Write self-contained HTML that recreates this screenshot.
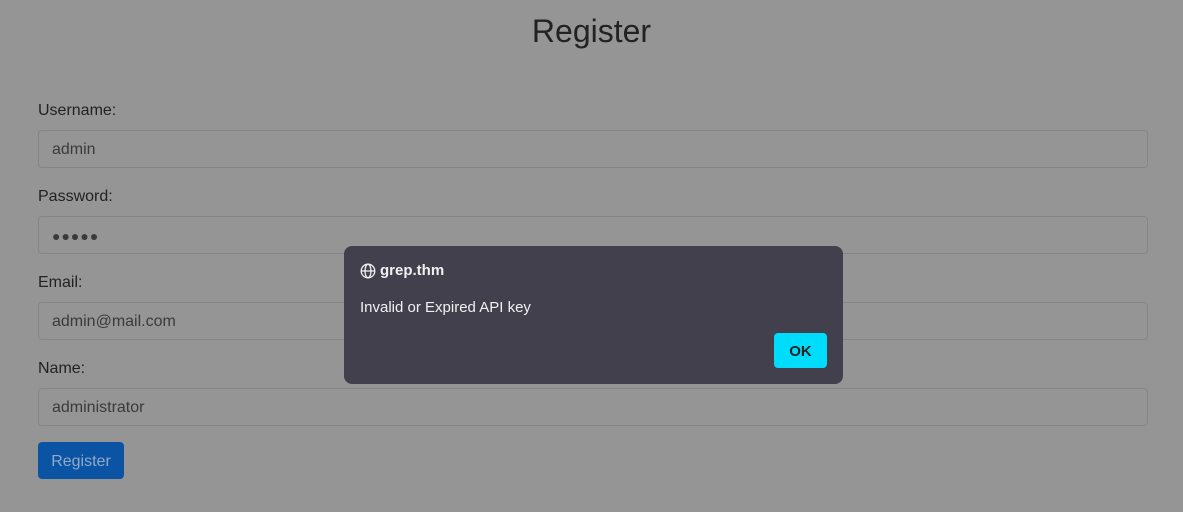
<!DOCTYPE html>
<html><head><style>
body{margin:0;width:1183px;height:512px;background:#959595;font-family:"Liberation Sans",sans-serif;position:relative;overflow:hidden}
h1{margin:0;position:absolute;top:13px;left:0;width:1183px;text-align:center;font-weight:400;font-size:32px;color:#222}
.l{position:absolute;left:38px;font-size:16px;color:#222}
.i{position:absolute;left:38px;width:1108px;height:36px;border:1px solid #858585;border-radius:4px;box-sizing:content-box;font-size:16px;color:#3a3a3a;line-height:38px;text-indent:13px}
.b{position:absolute;left:38px;top:442px;width:86px;height:37px;background:#0b54a4;border-radius:4px;color:#8fa9c9;font-size:16px;line-height:39px;text-align:center}
.d{position:absolute;left:344px;top:246px;width:499px;height:138px;background:#42404d;border-radius:8px;color:#f0f0f0;font-family:"Liberation Sans",sans-serif}
.t{position:absolute;left:16px;top:16px;font-size:15px;font-weight:bold;display:flex;align-items:center;gap:4px}
.m{position:absolute;left:16px;top:53px;font-size:15px}
.ok{position:absolute;left:430px;top:87px;width:53px;height:35px;background:#00dcfb;border-radius:4px;color:#222;font-weight:bold;font-size:15px;line-height:37px;text-align:center}
</style></head><body>
<h1>Register</h1>
<div class="l" style="top:102px">Username:</div>
<div class="i" style="top:130px">admin</div>
<div class="l" style="top:188px">Password:</div>
<div class="i" style="top:216px;font-size:14px;letter-spacing:1px">●●●●●</div>
<div class="l" style="top:274px">Email:</div>
<div class="i" style="top:302px">admin@mail.com</div>
<div class="l" style="top:360px">Name:</div>
<div class="i" style="top:388px">administrator</div>
<div class="b">Register</div>
<div class="d">
<div class="t"><svg width="16" height="16" viewBox="0 0 16 16" fill="none" stroke="#f0f0f0" stroke-width="1.3"><circle cx="8" cy="8" r="6.8"/><ellipse cx="8" cy="8" rx="3" ry="6.8"/><path d="M1.2 8h13.6"/></svg>grep.thm</div>
<div class="m">Invalid or Expired API key</div>
<div class="ok">OK</div>
</div>
</body></html>
